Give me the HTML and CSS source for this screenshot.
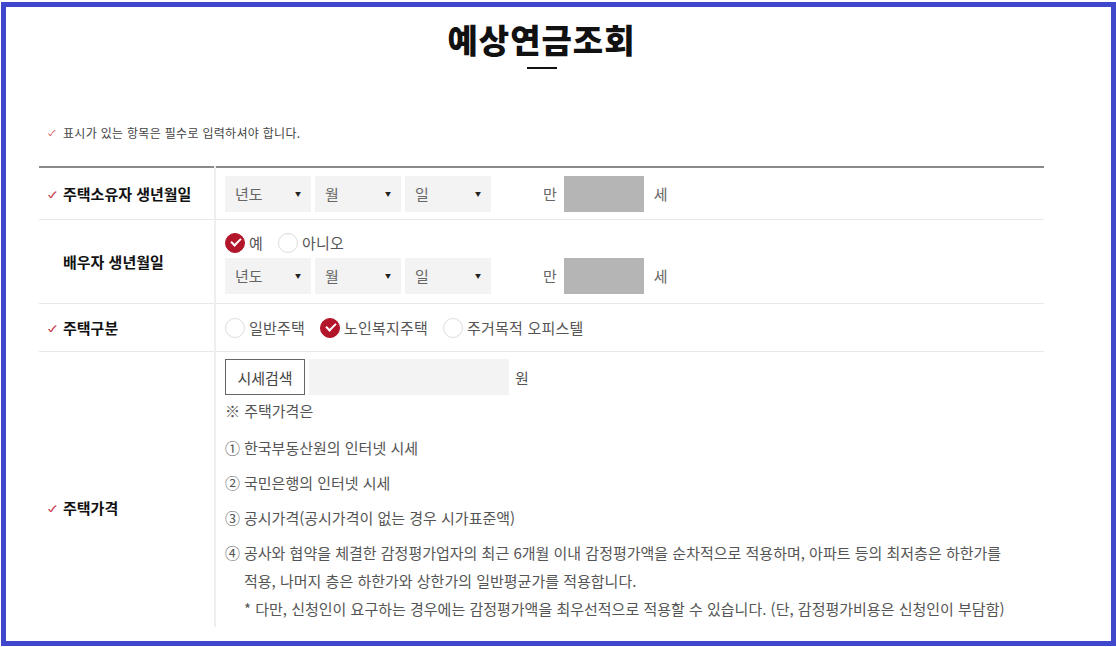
FILE: index.html
```html
<!DOCTYPE html>
<html lang="ko">
<head>
    <meta charset="UTF-8">
    <title>예상연금조회</title>
    <link rel="stylesheet" href="styles.css">
</head>
<body>
<div class="frame">
    <div class="wrap">
        <h1 class="page-title">예상연금조회</h1>
        <div class="title-bar"></div>

        <p class="req-note"><span class="req">✓</span>표시가 있는 항목은 필수로 입력하셔야 합니다.</p>

        <table class="form-table">
            <colgroup>
                <col class="col-label">
                <col>
            </colgroup>
            <tr class="row-owner">
                <th><span class="req">✓</span>주택소유자 생년월일</th>
                <td>
                    <div class="birth-line">
                        <div class="sel">년도<span class="arrow">▼</span></div>
                        <div class="sel">월<span class="arrow">▼</span></div>
                        <div class="sel">일<span class="arrow">▼</span></div>
                        <span class="age-label">만</span>
                        <div class="age-box"></div>
                        <span class="age-unit">세</span>
                    </div>
                </td>
            </tr>
            <tr class="row-spouse">
                <th>배우자 생년월일</th>
                <td>
                    <div class="radio-line">
                        <label class="radio checked"><span class="dot"></span>예</label>
                        <label class="radio"><span class="dot"></span>아니오</label>
                    </div>
                    <div class="birth-line">
                        <div class="sel">년도<span class="arrow">▼</span></div>
                        <div class="sel">월<span class="arrow">▼</span></div>
                        <div class="sel">일<span class="arrow">▼</span></div>
                        <span class="age-label">만</span>
                        <div class="age-box"></div>
                        <span class="age-unit">세</span>
                    </div>
                </td>
            </tr>
            <tr class="row-type">
                <th><span class="req">✓</span>주택구분</th>
                <td>
                    <div class="radio-line">
                        <label class="radio"><span class="dot"></span>일반주택</label>
                        <label class="radio checked"><span class="dot"></span>노인복지주택</label>
                        <label class="radio"><span class="dot"></span>주거목적 오피스텔</label>
                    </div>
                </td>
            </tr>
            <tr class="row-price">
                <th><span class="req">✓</span>주택가격</th>
                <td>
                    <div class="price-line">
                        <button class="search-btn">시세검색</button>
                        <div class="price-input"></div>
                        <span class="won">원</span>
                    </div>
                    <p class="price-head">※ 주택가격은</p>
                    <ul class="price-list">
                        <li><span class="num">①</span>한국부동산원의 인터넷 시세</li>
                        <li><span class="num">②</span>국민은행의 인터넷 시세</li>
                        <li><span class="num">③</span>공시가격(공시가격이 없는 경우 시가표준액)</li>
                        <li><span class="num">④</span>공사와 협약을 체결한 감정평가업자의 최근 6개월 이내 감정평가액을 순차적으로 적용하며, 아파트 등의 최저층은 하한가를 적용, 나머지 층은 하한가와 상한가의 일반평균가를 적용합니다.
                            <p class="price-sub">* 다만, 신청인이 요구하는 경우에는 감정평가액을 최우선적으로 적용할 수 있습니다. (단, 감정평가비용은 신청인이 부담함)</p>
                        </li>
                    </ul>
                </td>
            </tr>
        </table>
    </div>
</div>
</body>
</html>
```

FILE: styles.css
```css
html, body {
    margin: 0;
    padding: 0;
    background: #fff;
}
body {
    font-family: "Noto Sans CJK KR", "Noto Sans", sans-serif;
    color: #555;
    overflow: hidden;
}
.frame {
    box-sizing: border-box;
    width: 1115px;
    height: 644px;
    margin: 2px 0 0 1px;
    border: 5px solid #3f48cc;
    overflow: hidden;
}
.wrap {
    width: 1005px;
    margin-left: 33px;
}
.page-title {
    margin: 10px 0 0;
    font-size: 33px;
    line-height: 44px;
    font-weight: 800;
    color: #111;
    text-align: center;
    letter-spacing: 1px;
}
.title-bar {
    width: 30px;
    height: 2px;
    background: #111;
    margin: 6px auto 0;
}
.req {
    color: #c9394a;
    font-size: 11px;
    display: inline-block;
    width: 15px;
    transform: scaleY(0.7);
}
.req-note {
    margin: 55px 0 0 9px;
    font-size: 12px;
    line-height: 18px;
    color: #444;
    letter-spacing: 0.3px;
}
.req-note .req {
    letter-spacing: 0;
}
.form-table {
    width: 100%;
    margin-top: 24px;
    table-layout: fixed;
    border-collapse: collapse;
    border-top: 2px solid #8a8a8a;
}
.col-label {
    width: 176px;
}
.form-table th,
.form-table td {
    border-bottom: 1px solid #e8e8e8;
    padding: 0;
    vertical-align: middle;
}
.form-table th {
    text-align: left;
    padding-left: 9px;
    font-size: 15px;
    font-weight: 700;
    color: #111;
    border-right: 2px solid #eee;
}
.form-table th .req {
    font-size: 12px;
}
.form-table td {
    padding-left: 9px;
    padding-right: 24px;
}
.row-owner td, .row-owner th { height: 51px; }
.row-spouse td, .row-spouse th { height: 81px; }
.row-type td, .row-type th { height: 47px; }
.row-spouse th { padding-left: 24px; }
.row-spouse td { padding-top: 2px; }
.row-price td { padding-top: 7px; padding-bottom: 4px; border-bottom: none; vertical-align: top; }
.row-price th { border-bottom: none; padding-top: 36px; }

.birth-line {
    display: flex;
    align-items: center;
    gap: 4px;
}
.sel {
    box-sizing: border-box;
    width: 86px;
    height: 36px;
    background: #f3f3f3;
    padding: 0 10px 0 10px;
    display: flex;
    align-items: center;
    justify-content: space-between;
    font-size: 15px;
    color: #666;
}
.sel .arrow {
    font-size: 6px;
    color: #222;
}
.age-label {
    margin-left: 48px;
    font-size: 15px;
    color: #666;
}
.age-box {
    width: 80px;
    height: 36px;
    background: #b5b5b5;
    margin-left: 3px;
}
.age-unit {
    margin-left: 6px;
    font-size: 15px;
    color: #666;
}
.row-spouse .radio-line {
    margin-bottom: 4px;
}
.radio-line {
    display: flex;
    align-items: center;
    gap: 15px;
}
.radio {
    display: flex;
    align-items: center;
    font-size: 15px;
    color: #555;
    line-height: 22px;
    letter-spacing: 0.2px;
}
.radio .dot {
    box-sizing: border-box;
    width: 20px;
    height: 20px;
    border-radius: 50%;
    border: 1px solid #ddd;
    background: #fff;
    margin-right: 4px;
    position: relative;
}
.radio.checked .dot {
    border-color: #b3162a;
    background: #b3162a;
}
.radio.checked .dot::after {
    content: "";
    position: absolute;
    left: 5px;
    top: 4px;
    width: 8px;
    height: 4px;
    border-left: 2px solid #fff;
    border-bottom: 2px solid #fff;
    transform: rotate(-45deg);
}
.price-line {
    display: flex;
    align-items: center;
}
.search-btn {
    box-sizing: border-box;
    width: 80px;
    height: 36px;
    border: 1px solid #666;
    background: #fff;
    font-family: inherit;
    font-size: 15px;
    color: #444;
    padding: 0;
}
.price-input {
    width: 200px;
    height: 36px;
    background: #f3f3f3;
    margin-left: 4px;
}
.won {
    margin-left: 6px;
    font-size: 15px;
    color: #555;
}
.price-head {
    margin: 5px 0 0;
    font-size: 15px;
    line-height: 22px;
    color: #555;
}
.price-list {
    list-style: none;
    margin: 0;
    padding: 0;
}
.price-list li {
    font-size: 15px;
    line-height: 28px;
    color: #555;
    margin-top: 7px;
    padding-left: 19px;
    text-indent: -19px;
    word-break: keep-all;
}
.price-list li:first-child {
    margin-top: 12px;
}
.price-list .num {
    display: inline-block;
    width: 19px;
    text-indent: 0;
}
.price-sub {
    margin: 0;
    text-indent: 0;
    line-height: 28px;
}
```
